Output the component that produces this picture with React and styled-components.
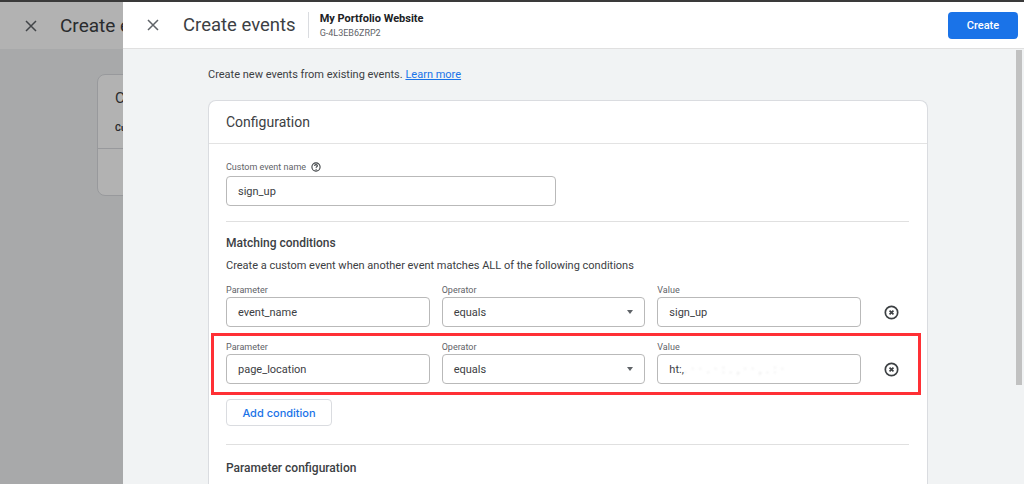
import React from "react";
import styled, { createGlobalStyle } from "styled-components";

const GlobalStyle = createGlobalStyle`
  html, body {
    margin: 0;
    padding: 0;
    width: 1024px;
    height: 484px;
    overflow: hidden;
    font-family: Roboto, "Liberation Sans", Arial, sans-serif;
  }
  * { box-sizing: border-box; }
`;

const Screen = styled.div`
  position: relative;
  width: 1024px;
  height: 484px;
  overflow: hidden;
  border-top: 2px solid #3a3a3a;
  background: #f1f3f4;
`;

/* page underneath the drawer */
const BackHeader = styled.div`
  height: 47px;
  background: #fff;
  display: flex;
  align-items: center;
  padding-left: 24px;
  gap: 23px;
  color: #3c4043;
  font-size: 19px;
`;

const BackBody = styled.div`
  padding: 25px 0 0 97px;
`;

const BackCard = styled.div`
  width: 600px;
  height: 122px;
  background: #fff;
  border: 1px solid #dadce0;
  border-radius: 8px;
`;

const BackCardTitle = styled.div`
  padding: 14px 17px 0;
  font-size: 15px;
  color: #3c4043;
  height: 48px;
`;

const BackCardSub = styled.div`
  padding: 0 17px;
  font-size: 9px;
  font-weight: 700;
  color: #3c4043;
  height: 26px;
  border-bottom: 1px solid #dadce0;
`;

const Scrim = styled.div`
  position: absolute;
  inset: 0;
  background: rgba(0, 0, 0, 0.3);
`;

/* drawer */
const Drawer = styled.div`
  position: absolute;
  top: 0;
  left: 123px;
  right: 0;
  bottom: 0;
  background: #f1f3f4;
  display: flex;
  flex-direction: column;
`;

const Header = styled.div`
  height: 47px;
  flex-shrink: 0;
  background: #fff;
  border-bottom: 1px solid #e0e0e0;
  display: flex;
  align-items: center;
  padding: 0 6px 0 23px;
`;

const IconButton = styled.button`
  background: none;
  border: none;
  padding: 0;
  width: 13px;
  height: 13px;
  display: flex;
  align-items: center;
  justify-content: center;
  color: #5f6368;
  cursor: pointer;
`;

const Title = styled.h1`
  margin: 0 0 0 24px;
  font-size: 18.5px;
  font-weight: 400;
  color: #3c4043;
  padding-right: 12px;
  line-height: 26px;
`;

const Divider = styled.div`
  width: 1px;
  height: 26px;
  background: #dadce0;
  margin-right: 11px;
`;

const Property = styled.div`
  display: flex;
  flex-direction: column;
  gap: 3px;
  margin-top: 0;
`;

const PropertyName = styled.span`
  font-size: 11px;
  font-weight: 700;
  color: #202124;
`;

const PropertyId = styled.span`
  font-size: 9px;
  color: #5f6368;
`;

const PrimaryButton = styled.button`
  margin-left: auto;
  width: 70px;
  height: 27px;
  border: none;
  border-radius: 4px;
  background: #1a73e8;
  color: #fff;
  font-family: inherit;
  font-size: 11px;
  font-weight: 500;
  cursor: pointer;
`;

const BodyRow = styled.div`
  flex: 1;
  display: flex;
  min-height: 0;
`;

const Content = styled.div`
  flex: 1;
  padding: 19px 0 0 85px;
`;

const Intro = styled.p`
  margin: 0 0 18px;
  font-size: 11px;
  line-height: 14px;
  color: #3c4043;

  a {
    color: #1a73e8;
    text-decoration: underline;
  }
`;

const Card = styled.section`
  width: 720px;
  background: #fff;
  border: 1px solid #dadce0;
  border-bottom: none;
  border-radius: 8px 8px 0 0;
  min-height: 400px;
`;

const CardHeader = styled.div`
  height: 43px;
  border-bottom: 1px solid #e3e3e3;
  display: flex;
  align-items: center;
  padding: 0 17px;
  font-size: 14px;
  color: #3c4043;
`;

const CardBody = styled.div`
  padding: 17px 18px 0 17px;
`;

const Label = styled.div`
  font-size: 9px;
  line-height: 12px;
  color: #5f6368;
  display: flex;
  align-items: center;
  gap: 5px;
  margin-bottom: ${({ $tight }) => ($tight ? "1px" : "3px")};
`;

const TextInput = styled.div`
  height: 30px;
  width: ${({ $width }) => $width || "100%"};
  border: 1px solid #b9b9b9;
  border-radius: 4px;
  display: flex;
  align-items: center;
  padding: 0 11px;
  font-size: 11px;
  color: #3c4043;
  background: #fff;
  overflow: hidden;
  white-space: nowrap;
`;

const Caret = styled.span`
  margin-left: auto;
  width: 0;
  height: 0;
  border-left: 3.5px solid transparent;
  border-right: 3.5px solid transparent;
  border-top: 4px solid #5f6368;
`;

const Rule = styled.hr`
  margin: ${({ $m }) => $m};
  border: none;
  border-top: 1px solid #e0e0e0;
`;

const SectionTitle = styled.h2`
  margin: 0;
  font-size: 12px;
  line-height: 16px;
  font-weight: 500;
  color: #3c4043;
`;

const SectionText = styled.p`
  margin: 8px 0 11px;
  font-size: 11px;
  line-height: 14px;
  color: #3c4043;
`;

const ConditionRow = styled.div`
  position: relative;
  display: grid;
  grid-template-columns: repeat(3, 1fr) 36px;
  column-gap: 12px;
  align-items: end;
  margin-bottom: ${({ $gap }) => $gap};
`;

const RemoveButton = styled.button`
  background: none;
  border: none;
  padding: 0;
  height: 30px;
  display: flex;
  align-items: center;
  justify-content: center;
  color: #3c4043;
  cursor: pointer;
`;

const Highlight = styled.div`
  position: absolute;
  left: -15px;
  right: -12px;
  top: -8px;
  bottom: -11px;
  border: 3px solid #ff3035;
  pointer-events: none;
`;

const Blurred = styled.span`
  color: #d6d6d6;
  filter: blur(1.2px);
  letter-spacing: 1px;
`;

const OutlineButton = styled.button`
  width: 106px;
  height: 27px;
  background: #fff;
  border: 1px solid #dadce0;
  border-radius: 4px;
  color: #1a73e8;
  font-family: Inter, Roboto, sans-serif;
  font-size: 11px;
  font-weight: 500;
  cursor: pointer;
`;

const ScrollTrack = styled.div`
  width: 10px;
  padding: 1px 2px 0 2px;
`;

const ScrollThumb = styled.div`
  width: 6px;
  height: 335px;
  background: #c1c1c1;
`;

function CloseIcon() {
  return (
    <svg width="12" height="12" viewBox="0 0 12 12">
      <path d="M1 1L11 11M11 1L1 11" stroke="currentColor" strokeWidth="1.5" />
    </svg>
  );
}

function HelpIcon() {
  return (
    <svg width="10" height="10" viewBox="0 0 10 10">
      <circle cx="5" cy="5" r="4.1" fill="none" stroke="#3c4043" strokeWidth="1.1" />
      <path
        d="M3.6 3.9C3.6 3.1 4.2 2.6 5 2.6C5.8 2.6 6.4 3.1 6.4 3.8C6.4 4.7 5.1 4.8 5.1 5.8"
        fill="none"
        stroke="#3c4043"
        strokeWidth="1.1"
      />
      <circle cx="5.1" cy="7.3" r="0.6" fill="#3c4043" />
    </svg>
  );
}

function RemoveIcon() {
  return (
    <svg width="15" height="15" viewBox="0 0 16 16">
      <circle cx="8" cy="8" r="6.6" fill="none" stroke="currentColor" strokeWidth="1.8" />
      <path d="M5.9 5.9L10.1 10.1M10.1 5.9L5.9 10.1" stroke="currentColor" strokeWidth="1.8" />
    </svg>
  );
}

const conditions = [
  { param: "event_name", operator: "equals", value: "sign_up", gap: "14px" },
  {
    param: "page_location",
    operator: "equals",
    value: "ht:,",
    hidden: " .  ·  ·   .  · :   . ,  ·  ·  ,  .  : ·",
    gap: "15px",
  },
];

function Condition({ cond, highlighted }) {
  return (
    <ConditionRow $gap={cond.gap}>
      <div>
        <Label $tight>Parameter</Label>
        <TextInput>{cond.param}</TextInput>
      </div>
      <div>
        <Label $tight>Operator</Label>
        <TextInput>
          {cond.operator}
          <Caret />
        </TextInput>
      </div>
      <div>
        <Label $tight>Value</Label>
        <TextInput>
          {cond.value}
          {cond.hidden && <Blurred>{cond.hidden}</Blurred>}
        </TextInput>
      </div>
      <RemoveButton aria-label="Remove condition">
        <RemoveIcon />
      </RemoveButton>
      {highlighted && <Highlight />}
    </ConditionRow>
  );
}

export default function App() {
  return (
    <Screen>
      <GlobalStyle />
      <BackHeader>
        <IconButton>
          <CloseIcon />
        </IconButton>
        Create events
      </BackHeader>
      <BackBody>
        <BackCard>
          <BackCardTitle>Configuration</BackCardTitle>
          <BackCardSub>Custom event name</BackCardSub>
        </BackCard>
      </BackBody>
      <Scrim />

      <Drawer>
        <Header>
          <IconButton aria-label="Close">
            <CloseIcon />
          </IconButton>
          <Title>Create events</Title>
          <Divider />
          <Property>
            <PropertyName>My Portfolio Website</PropertyName>
            <PropertyId>G-4L3EB6ZRP2</PropertyId>
          </Property>
          <PrimaryButton>Create</PrimaryButton>
        </Header>

        <BodyRow>
          <Content>
            <Intro>
              Create new events from existing events. <a href="#">Learn more</a>
            </Intro>
            <Card>
              <CardHeader>Configuration</CardHeader>
              <CardBody>
                <Label>
                  Custom event name <HelpIcon />
                </Label>
                <TextInput $width="330px">sign_up</TextInput>
                <Rule $m="15px 0 13px" />

                <SectionTitle>Matching conditions</SectionTitle>
                <SectionText>
                  Create a custom event when another event matches ALL of the following conditions
                </SectionText>
                {conditions.map((c, i) => (
                  <Condition key={i} cond={c} highlighted={i === 1} />
                ))}
                <OutlineButton>Add condition</OutlineButton>
                <Rule $m="18px 0 15px" />
                <SectionTitle>Parameter configuration</SectionTitle>
              </CardBody>
            </Card>
          </Content>
          <ScrollTrack>
            <ScrollThumb />
          </ScrollTrack>
        </BodyRow>
      </Drawer>
    </Screen>
  );
}
